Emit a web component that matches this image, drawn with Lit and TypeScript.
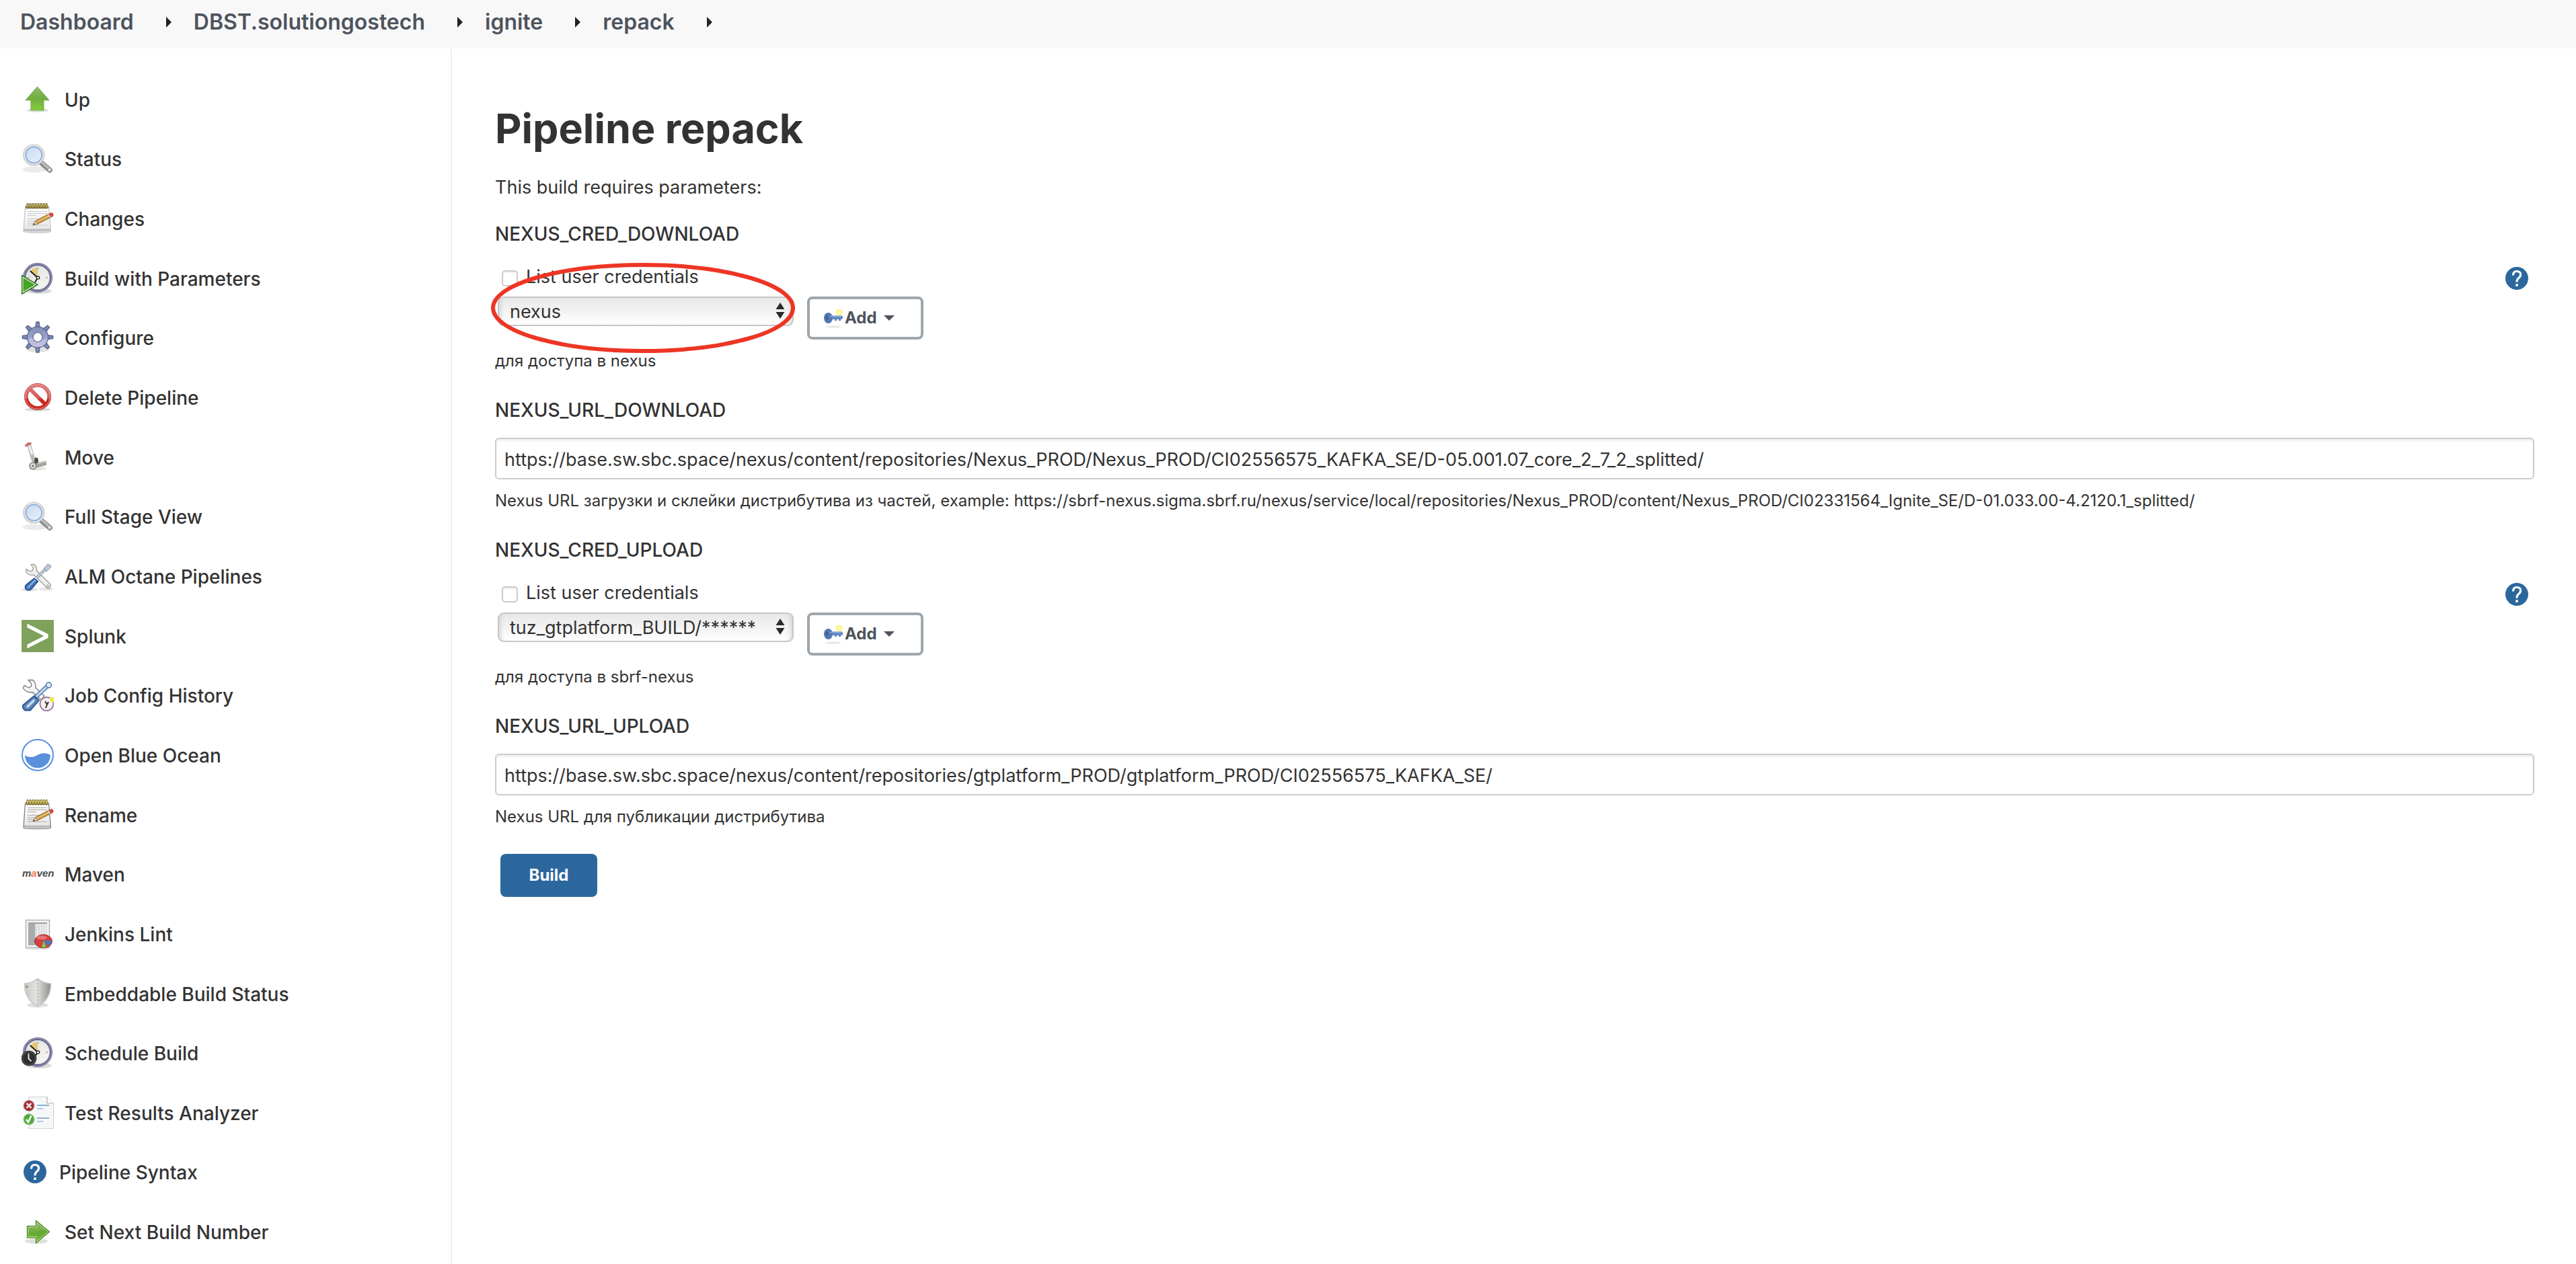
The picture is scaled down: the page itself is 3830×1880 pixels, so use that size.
import { LitElement, html, svg, css, TemplateResult, SVGTemplateResult } from "lit";
import { customElement, property } from "lit/decorators.js";

/* ---------- Icon artwork, drawn on a 48 x 48 grid ---------- */

const magnifier = svg`
  <ellipse cx="20" cy="40" rx="18" ry="4.5" fill="#000" opacity=".08"/>
  <path d="M28 29 L42 41" stroke="#8f8f8f" stroke-width="8" stroke-linecap="round"/>
  <path d="M29 28 L41 39" stroke="#c4c4c4" stroke-width="3" stroke-linecap="round"/>
  <circle cx="41.500" cy="40.500" r="2.600" fill="#e6e6e6" stroke="#9c9c9c"/>
  <circle cx="18.300" cy="18.500" r="15.500" fill="#e9e9e8" stroke="#c2c2c2" stroke-width="1.200"/>
  <circle cx="18.300" cy="18.500" r="12" fill="url(#lens)" stroke="#8fb0dc" stroke-width="2"/>`;

const notepad = (line: string, ring: string, edge: string) => svg`
  <ellipse cx="24" cy="44" rx="18" ry="2.500" fill="#000" opacity=".12"/>
  <path d="M5.500 7 H40.500 L43.500 42.500 Q43.500 44 42 44 H4.500 Q3 44 3 42.500 Z" fill="url(#paper)" stroke="${edge}" stroke-width="1.200"/>
  <path d="M5.500 5 H40.500 V9 H5.500 Z" fill="#9a9a92"/>
  <path d="M3.500 41 H43" stroke="#b5b5b5" stroke-width="2.500"/>
  <path d="M9 13.500 H38 M9 16.500 H38 M9 19.500 H22 M9 24.500 H30 M9 28 H26 M9 31 H22 M9 34 H38" stroke="${line}" stroke-width="1"/>
  <path d="M9 2.500 V8 M13 2.500 V8 M17 2.500 V8 M21 2.500 V8 M25 2.500 V8 M29 2.500 V8 M33 2.500 V8 M37 2.500 V8" stroke="#6f601f" stroke-width="3.200" stroke-linecap="round"/>
  <path d="M9 3 V7 M13 3 V7 M17 3 V7 M21 3 V7 M25 3 V7 M29 3 V7 M33 3 V7 M37 3 V7" stroke="${ring}" stroke-width="1.600" stroke-linecap="round"/>
  <path d="M17 33.500 L21 27.500 L41 17 L44 22 L24 32 Z" fill="#d3a04a" stroke="#8a5a1c" stroke-width="1"/>
  <path d="M22 29.500 L42 19.500" stroke="#f0cf8c" stroke-width="1.200"/>
  <path d="M17 33.500 L21 27.500 L24 32 Z" fill="#ecdcb8" stroke="#8a6a3c" stroke-width=".800"/>
  <path d="M17 33.500 L18.800 31 L20 32.500 Z" fill="#333"/>
  <path d="M39 18 L41 17 L44 22 L42 23 Z" fill="#c9c9c9"/>
  <path d="M41 17 L44 15.500 Q46.500 15 47 17.500 Q47.500 20 46 21 L44 22 Z" fill="#e0463f" stroke="#a33" stroke-width=".600"/>`;

const clockFace = svg`
  <ellipse cx="26" cy="43" rx="19" ry="4" fill="#000" opacity=".14"/>
  <circle cx="24" cy="23" r="20" fill="url(#face)" stroke="#5c5c80" stroke-width="4"/>
  <circle cx="24" cy="23" r="20.500" fill="none" stroke="#9a9abd" stroke-width="1.600"/>
  <circle cx="24" cy="23" r="17.600" fill="none" stroke="#b9b9c6" stroke-width=".800"/>
  <path d="M24 23 L13 13 Q18 8 24 8 Z" fill="#e3c368" opacity=".9"/>
  <circle cx="24" cy="9" r="1.500" fill="#b7b7b0"/>
  <circle cx="37.500" cy="23" r="1.500" fill="#b7b7b0"/>
  <circle cx="10" cy="23" r="1.500" fill="#b7b7b0"/>
  <path d="M13 13 L24 23 L20 30" fill="none" stroke="#111" stroke-width="1.700"/>
  <circle cx="24.500" cy="23" r="2.200" fill="#fff" stroke="#111" stroke-width="1.200"/>`;

const question = svg`
  <circle cx="24" cy="24" r="20.400" fill="#2b679d"/>
  <path d="M17.400 18.600 Q17.400 11.400 24 11.400 Q30.800 11.400 30.800 17.800 Q30.800 20.600 27.600 23.200 Q24 26 24 30.600" fill="none" stroke="#fff" stroke-width="3.800"/>
  <rect x="21.900" y="34" width="4.300" height="4.300" fill="#fff"/>`;

const gearTooth = "M20.800 9 L22 .800 H26 L27.200 9 Z";

const icons: Record<string, SVGTemplateResult> = {
  up: svg`
    <ellipse cx="24" cy="40" rx="16" ry="3" fill="#000" opacity=".13"/>
    <path d="M23.500 5 L41 25 H33 V40 H14 V25 H6 Z" fill="url(#green)" stroke="#74a848" stroke-width="1"/>`,
  magnifier,
  changes: notepad("#c9c9c9", "#cdb653", "#c2c2c2"),
  rename: notepad("#a8a8a8", "#f2da55", "#777777"),
  build: svg`${clockFace}
    <path d="M.600 19.500 L24 33.500 L.600 47.400 Z" fill="#48a32a" stroke="#2d6a1a" stroke-width="1.200"/>
    <path d="M2 22.200 L21 33.500 L2 44.800 Z" fill="none" stroke="#d8efcf" stroke-width="1.100"/>`,
  gear: svg`
    <ellipse cx="24" cy="42" rx="17" ry="4" fill="#000" opacity=".12"/>
    <g fill="url(#gear)" stroke="#55618a" stroke-width="1.300">
      ${[0, 45, 90, 135, 180, 225, 270, 315].map((a) => svg`<path d="${gearTooth}" transform="rotate(${a} 24 23.500)"/>`)}
      <circle cx="24" cy="23.500" r="15.500"/>
    </g>
    <circle cx="24" cy="23.500" r="14.900" fill="url(#gear)"/>
    <path d="M10 27 Q18 21 27 26 Q33 29 38.500 24 Q38 35 28 38 Q14 39 10 27 Z" fill="#c9c3e4" opacity=".7"/>
    <circle cx="24" cy="23.500" r="7" fill="#fff" stroke="#55618a" stroke-width="1.200"/>`,
  forbid: svg`
    <ellipse cx="24" cy="42" rx="19" ry="2.500" fill="#000" opacity=".16"/>
    <circle cx="24" cy="23" r="17" fill="#fff"/>
    <g fill="none" stroke="url(#red)">
      <circle cx="24" cy="23" r="17" stroke-width="5.600"/>
      <path d="M12 11 L36 35" stroke-width="5.600"/>
    </g>
    <circle cx="24" cy="23" r="19.600" fill="none" stroke="#b53838" stroke-width=".800"/>
    <circle cx="24" cy="23" r="18.300" fill="none" stroke="#f3b9b9" stroke-width=".800"/>`,
  move: svg`
    <ellipse cx="24" cy="41" rx="13" ry="3" fill="#000" opacity=".1"/>
    <path d="M11 5 L17 26 L20 34" fill="none" stroke="#b9b9b6" stroke-width="6"/>
    <path d="M11.500 7 L16 20" fill="none" stroke="#f5f5f3" stroke-width="3"/>
    <path d="M6 8 Q9 2.500 14.500 4" fill="none" stroke="#cf6a70" stroke-width="3.500"/>
    <path d="M19 33 L37 29 L37 36 L21 40 Z" fill="#a3a69e"/>
    <path d="M20 34 L37 30" stroke="#d2d4ce" stroke-width="1.500"/>
    <ellipse cx="22" cy="29" rx="3" ry="4.500" fill="#474a47"/>
    <circle cx="17" cy="37" r="5" fill="#d6d8d3" stroke="#80837d" stroke-width="1.600"/>
    <circle cx="17" cy="37" r="1.600" fill="#777"/>`,
  tools: svg`
    <ellipse cx="12" cy="44" rx="12" ry="2.500" fill="#000" opacity=".12"/>
    <ellipse cx="36" cy="43" rx="11" ry="2.500" fill="#000" opacity=".1"/>
    <path d="M14 6.500 L18 6 Q23 9 22.500 16 L43 36 Q44.500 41 39 42.500 L18.500 22 Q11 24 6.500 17 L7 13.500 L12.500 17 L16.500 15.500 L17.500 11.500 Z" fill="#eeeeec" stroke="#8c8e8a" stroke-width="1.100"/>
    <circle cx="39" cy="38.500" r="1.600" fill="#fff" stroke="#8c8e8a"/>
    <path d="M22 27 L36 13" stroke="#8493a5" stroke-width="4.200"/>
    <path d="M22 27 L36 13" stroke="#c6d3e0" stroke-width="2.200"/>
    <path d="M33.500 12 L39 6 L44 8.500 L42.500 12 L37 17 Z" fill="#b9c8d8" stroke="#8493a5" stroke-width="1"/>
    <path d="M19 27 L24.500 31.500 L15 43 Q11 46.500 7 44 Q3.500 40.500 7 36.500 Z" fill="#3f6fb3" stroke="#204a87" stroke-width="1.300"/>
    <path d="M20 30 L9.500 41" stroke="#8fb4e3" stroke-width="2.200" stroke-linecap="round"/>`,
  splunk: svg`
    <rect width="48" height="48" fill="#7ea25c"/>
    <path d="M8 5 L40 21 V27 L8 43 V36.500 L32.500 24 L8 11.500 Z" fill="#fff" stroke="#6c8f4b" stroke-width=".600"/>`,
  history: svg`
    <path d="M10 1.500 L17 1.500 Q22 6 21 13 L34 25 L29 31 L16.500 19.500 Q7 21 2.500 13.500 L4 9.500 L11 13 L14.500 10.500 L14.500 6.500 Z" fill="#f4f4f3" stroke="#7c7e7a" stroke-width="1.300"/>
    <path d="M21 27 L40 9" stroke="#4a74ae" stroke-width="6"/>
    <path d="M21 27 L40 9" stroke="#c6d6ea" stroke-width="3.200"/>
    <circle cx="40.500" cy="9" r="4" fill="#dbe6f3" stroke="#4a74ae" stroke-width="1.400"/>
    <path d="M19 25 L26 31.500 L13 46.500 H5 L2 43 V39 Z" fill="#5f86bb" stroke="#2c538e" stroke-width="1.800"/>
    <path d="M19 31 L8 42" stroke="#c9daf0" stroke-width="3.500"/>
    <circle cx="37.500" cy="37" r="10" fill="#f4f1f3" stroke="#9a7ca1" stroke-width="1.800"/>
    <path d="M42 27 L48 27 V35 L43 33 Z" fill="#efe743"/>
    <path d="M35 33 L38 38 L40 34 M38 38 L36 43" fill="none" stroke="#3b3420" stroke-width="2"/>`,
  ocean: svg`
    <circle cx="24" cy="24" r="23" fill="#fff" stroke="#5a90dc" stroke-width="2"/>
    <path d="M5 24.500 Q12 29 21 25.500 Q34 18 43 24 A19 19 0 0 1 5 24.500 Z" fill="#5a90dc"/>`,
  maven: svg`
    <text x="1" y="28" font-family="Liberation Sans, sans-serif" font-size="15" font-weight="700" font-style="italic" fill="#4b4b4b">m<tspan fill="#ee7b4a">a</tspan>ven</text>`,
  lint: svg`
    <path d="M4 45 H42 L38 47.500 H8 Z" fill="#000" opacity=".1"/>
    <rect x="6.500" y="3.500" width="35" height="41" fill="#f2f2f2" stroke="#b0b0b0" stroke-width="1.400"/>
    <rect x="10" y="7" width="10" height="34" fill="#aaaaaa"/>
    <rect x="20" y="7" width="18" height="34" fill="#dcdcdc"/>
    <path d="M10 8 H38" stroke="#a0a0a0" stroke-width="2"/>
    <path d="M24 9 V41 M28 9 V41 M32 9 V41 M36 9 V41" stroke="#f5f5f5" stroke-width="1.200"/>
    <ellipse cx="32.500" cy="35" rx="13" ry="10" fill="#d24040" stroke="#a02a2a" stroke-width="1"/>
    <ellipse cx="30" cy="29.500" rx="8" ry="3" fill="#ec8a86" opacity=".7"/>
    <path d="M32 34 H45.300 Q45 39 39 42 Z" fill="#4a76bd"/>
    <path d="M33 34 L37 43.500 Q33 45 29.500 44 Z" fill="#86c34a"/>`,
  shield: svg`
    <ellipse cx="24" cy="41" rx="16" ry="3.500" fill="#000" opacity=".12"/>
    <path d="M24 1.500 Q32 8 43.500 9 Q44 32 24 43 Q4 32 4.500 9 Q16 8 24 1.500 Z" fill="url(#steel)" stroke="#c6c8c4" stroke-width="1.600"/>
    <path d="M24 3 V42" stroke="#a3a5a0" stroke-width="2.500" stroke-dasharray="1.500 3.500" opacity=".7"/>
    <circle cx="8" cy="13.500" r="1.800" fill="#8d8f8a"/>
    <circle cx="40" cy="13.500" r="1.800" fill="#8d8f8a"/>`,
  schedule: svg`${clockFace}
    <circle cx="11" cy="32" r="11.300" fill="#2f2f2f"/>
    <circle cx="11" cy="32" r="9.500" fill="none" stroke="#4d4d4d" stroke-width="1.500"/>
    <path d="M10.500 25 V32.500 L14.500 36.500" fill="none" stroke="#dedede" stroke-width="2"/>`,
  results: svg`
    <path d="M11 .500 H38 L47.500 10 V47.500 H11 Z" fill="#f6f7f8" stroke="#cfd1d3" stroke-width="1"/>
    <path d="M38 .500 V10 H47.500" fill="#fff" stroke="#a9abad" stroke-width="1.200"/>
    <path d="M23 13 H41 M23 32 H41" stroke="#6f98cd" stroke-width="1.500"/>
    <path d="M23 18 H32.500 M23 37 H32.500" stroke="#9dbbe0" stroke-width="1.500"/>
    <circle cx="11" cy="13.600" r="8.200" fill="#a52a2c" stroke="#c9bcbc" stroke-width="1.200"/>
    <path d="M7.500 10 L14.500 17 M14.500 10 L7.500 17" stroke="#e6dede" stroke-width="2.800"/>
    <circle cx="11" cy="33.800" r="8.200" fill="#4eae32" stroke="#bccdb8" stroke-width="1.200"/>
    <path d="M7 34 L10 38 L14.500 28.500" fill="none" stroke="#fff" stroke-width="2.500"/>`,
  question,
  next: svg`
    <ellipse cx="22" cy="38" rx="17" ry="4" fill="#000" opacity=".12"/>
    <path d="M8.500 15.500 H21.500 V7.500 L41.500 24 L21.500 41 V33 H8.500 Z" fill="url(#green)" stroke="#4b7f27" stroke-width="1.200"/>
    <path d="M10 17 H23 V10.500 L39.500 24 L23 38 V31.500 H10 Z" fill="none" stroke="#c4e3a4" stroke-width=".900"/>
    <path d="M10 25 Q22 24 36 21 L39 24 L23 37 V31 H10 Z" fill="#5aa52a" opacity=".55"/>`,
};

const gradients = svg`
  <defs>
    <linearGradient id="green" x1="0" y1="0" x2="0" y2="1"><stop offset="0" stop-color="#8fbd68"/><stop offset=".500" stop-color="#6fae40"/><stop offset="1" stop-color="#84cc3c"/></linearGradient>
    <linearGradient id="lens" x1="0" y1="0" x2="1" y2="1"><stop offset="0" stop-color="#c5daf2"/><stop offset="1" stop-color="#e9f0fa"/></linearGradient>
    <linearGradient id="paper" x1="0" y1="0" x2="0" y2="1"><stop offset="0" stop-color="#ffffff"/><stop offset="1" stop-color="#e4e4e4"/></linearGradient>
    <linearGradient id="face" x1="0" y1="0" x2="1" y2="1"><stop offset="0" stop-color="#dcdcd8"/><stop offset="1" stop-color="#fafaf8"/></linearGradient>
    <linearGradient id="gear" gradientUnits="userSpaceOnUse" x1="24" y1="0" x2="24" y2="47"><stop offset="0" stop-color="#7385ae"/><stop offset=".500" stop-color="#98a3c9"/><stop offset="1" stop-color="#cbc5e6"/></linearGradient>
    <linearGradient id="red" gradientUnits="userSpaceOnUse" x1="24" y1="3" x2="24" y2="43"><stop offset="0" stop-color="#e07a7a"/><stop offset=".550" stop-color="#d65a5a"/><stop offset=".600" stop-color="#c92a24"/><stop offset="1" stop-color="#cf2a24"/></linearGradient>
    <linearGradient id="steel" x1="0" y1="0" x2="1" y2="0"><stop offset="0" stop-color="#c4c6c1"/><stop offset=".450" stop-color="#e3e4e1"/><stop offset="1" stop-color="#8f918c"/></linearGradient>
  </defs>`;

@customElement("app-icon")
export class AppIcon extends LitElement {
  @property() name = "up";

  static styles = css`
    :host { display: block; flex: none; width: 48px; height: 48px; }
    svg { display: block; width: 100%; height: 100%; }
  `;

  render() {
    return html`<svg viewBox="0 0 48 48" fill="none" aria-hidden="true">${gradients}${icons[this.name]}</svg>`;
  }
}

/* ---------- Page data ---------- */

const crumbs = ["Dashboard", "DBST.solutiongostech", "ignite", "repack"];

const tasks: Array<[string, string]> = [
  ["up", "Up"],
  ["magnifier", "Status"],
  ["changes", "Changes"],
  ["build", "Build with Parameters"],
  ["gear", "Configure"],
  ["forbid", "Delete Pipeline"],
  ["move", "Move"],
  ["magnifier", "Full Stage View"],
  ["tools", "ALM Octane Pipelines"],
  ["splunk", "Splunk"],
  ["history", "Job Config History"],
  ["ocean", "Open Blue Ocean"],
  ["rename", "Rename"],
  ["maven", "Maven"],
  ["lint", "Jenkins Lint"],
  ["shield", "Embeddable Build Status"],
  ["schedule", "Schedule Build"],
  ["results", "Test Results Analyzer"],
  ["question", "Pipeline Syntax"],
  ["next", "Set Next Build Number"],
];

@customElement("app-root")
export class AppRoot extends LitElement {
  static styles = css`
    :host {
      display: flex;
      flex-direction: column;
      min-height: 100vh;
      background: #fff;
      color: #333;
      font-family: Inter, "Noto Sans", sans-serif;
      font-size: 27px;
      line-height: 36px;
    }
    *, *::before, *::after { box-sizing: border-box; }
    a { color: inherit; text-decoration: none; }
    button, input, select { font: inherit; color: inherit; margin: 0; }

    .crumbs {
      display: flex;
      align-items: center;
      height: 72px;
      margin: 0;
      padding: 0 30px 6px;
      list-style: none;
      background: #f8f8f8;
      color: #4d545d;
      font-size: 32px;
      font-weight: 600;
    }
    .crumb { display: flex; align-items: center; }
    .crumb::after {
      content: "";
      margin: 0 33px 0 48px;
      border: solid transparent;
      border-width: 8px 0 8px 8px;
      border-left-color: #222;
    }

    .body { display: flex; flex: 1; }
    .side { flex: none; width: 672px; border-right: 2px solid #efefef; }
    .tasks {
      display: grid;
      grid-auto-rows: 88px 89px 89px;
      align-items: start;
      margin: 0;
      padding: 52px 32px 0;
      list-style: none;
      font-size: 28px;
      font-weight: 500;
    }
    .task { display: flex; align-items: center; gap: 16px; line-height: 44px; }
    .task-label { padding-top: 2px; }
    .small { width: 40px; height: 40px; }

    .main { flex: 1; min-width: 0; padding: 83px 62px 60px 64px; }
    .title { margin: 0 0 34px; font-size: 61px; line-height: 72px; font-weight: 700; }
    .intro { margin: 0 0 33px; }
    .param { position: relative; margin-bottom: 39px; }
    .name { display: block; font-size: 28px; font-weight: 500; }
    .list-row { display: flex; align-items: center; justify-content: space-between; height: 36px; margin: 28px 0 11px; padding: 0 6px 0 10px; }
    .check { display: flex; align-items: center; gap: 12px; }
    .box {
      appearance: none;
      width: 24px;
      height: 24px;
      margin-top: 4px;
      border: 2px solid #ccc;
      border-radius: 5px;
      background: #fff;
      box-shadow: inset 0 2px 2px #eee;
    }
    .help { display: block; padding: 0; border: 0; background: none; margin-top: 4px; }
    .pick-row { display: flex; align-items: flex-start; gap: 20px; padding-left: 4px; }
    .pick { position: relative; display: block; }
    .select {
      appearance: none;
      display: block;
      width: 440px;
      height: 44px;
      padding: 2px 56px 0 16px;
      border: 2px solid #c6c6c6;
      border-radius: 9px;
      background: linear-gradient(#e8e8e8, #f3f3f3 50%, #fff);
      box-shadow: inset 8px 0 6px -6px #d2d2d2, inset -8px 0 6px -6px #d2d2d2;
      line-height: 36px;
    }
    .arrows { position: absolute; right: 13px; top: 9px; width: 14px; height: 24px; pointer-events: none; }
    .add {
      display: flex;
      align-items: center;
      width: 173px;
      height: 64px;
      padding: 0 0 0 20px;
      border: 4px solid #9da6ad;
      border-radius: 8px;
      background: #fff;
      color: #4d545d;
      font-size: 24px;
      font-weight: 700;
    }
    .key { flex: none; width: 32px; height: 40px; }
    .caret { margin-left: 10px; border: solid transparent; border-width: 8px 8px 0; border-top-color: #4d545d; }
    .text {
      display: block;
      width: 100%;
      height: 62px;
      margin-top: 23px;
      padding: 2px 12px 0;
      border: 2px solid #ccc;
      border-radius: 6px;
      background: #fff;
      box-shadow: inset 0 3px 3px #f0f0f0;
    }
    .note { margin: 16px 0 0; font-size: 24px; line-height: 32px; }
    .ring { position: absolute; left: -8px; top: 60px; width: 456px; height: 136px; pointer-events: none; }
    .submit {
      display: block;
      width: 144px;
      height: 64px;
      margin-left: 8px;
      padding: 0;
      border: 0;
      border-radius: 8px;
      background: #2b679d;
      color: #fff;
      font-size: 24px;
      font-weight: 700;
    }
  `;

  private credentials(name: string, value: string, note: string, ringed: boolean): TemplateResult {
    return html`
      <section class="param">
        <label class="name" for=${name}>${name}</label>
        <div class="list-row">
          <label class="check"><input class="box" type="checkbox" />List user credentials</label>
          <button class="help" type="button" aria-label="Help"><app-icon class="small" name="question"></app-icon></button>
        </div>
        <div class="pick-row">
          <span class="pick">
            <select class="select" id=${name}><option>${value}</option></select>
            <svg class="arrows" viewBox="0 0 14 24" aria-hidden="true"><path d="M7 0 L13.500 10 H.500 Z M7 24 L13.500 14 H.500 Z" fill="#2b2b2b"/></svg>
          </span>
          <button class="add" type="button">
            <svg class="key" viewBox="0 0 32 40" aria-hidden="true">
              <ellipse cx="15" cy="33" rx="12" ry="2" fill="#000" opacity=".08"/>
              <circle cx="23.500" cy="11.500" r="5" fill="#fbf58a"/>
              <circle cx="23.500" cy="11.500" r="2" fill="#fffbc9"/>
              <path d="M12 16.500 H28 L29.500 19 L28 22 H26 V24 H23 V22 H20 V24 H17 V22 H12 Z" fill="#6288c4"/>
              <ellipse cx="7.500" cy="20" rx="6.500" ry="8" fill="#5478b4"/>
              <ellipse cx="5.500" cy="19.500" rx="2" ry="3.500" fill="#456294"/>
              <path d="M9 17.500 H27" stroke="#8fadd9" stroke-width="1.500"/>
            </svg>Add<span class="caret"></span>
          </button>
        </div>
        <p class="note">${note}</p>
        ${ringed
          ? html`<svg class="ring" viewBox="0 0 456 136" aria-hidden="true"><ellipse cx="228" cy="68" rx="223" ry="64" fill="none" stroke="#ee3524" stroke-width="6"/></svg>`
          : ""}
      </section>`;
  }

  private url(name: string, value: string, note: string): TemplateResult {
    return html`
      <section class="param">
        <label class="name" for=${name}>${name}</label>
        <input class="text" id=${name} type="text" .value=${value} />
        <p class="note">${note}</p>
      </section>`;
  }

  render() {
    return html`
      <nav><ul class="crumbs">${crumbs.map((c) => html`<li class="crumb"><a href="#">${c}</a></li>`)}</ul></nav>
      <div class="body">
        <nav class="side">
          <ul class="tasks">
            ${tasks.map(([icon, label]) => html`
              <li><a class="task" href="#"><app-icon class=${icon === "question" ? "small" : ""} name=${icon}></app-icon><span class="task-label">${label}</span></a></li>`)}
          </ul>
        </nav>
        <main class="main">
          <h1 class="title">Pipeline repack</h1>
          <p class="intro">This build requires parameters:</p>
          ${this.credentials("NEXUS_CRED_DOWNLOAD", "nexus", "для доступа в nexus", true)}
          ${this.url(
            "NEXUS_URL_DOWNLOAD",
            "https://base.sw.sbc.space/nexus/content/repositories/Nexus_PROD/Nexus_PROD/CI02556575_KAFKA_SE/D-05.001.07_core_2_7_2_splitted/",
            "Nexus URL загрузки и склейки дистрибутива из частей, example: https://sbrf-nexus.sigma.sbrf.ru/nexus/service/local/repositories/Nexus_PROD/content/Nexus_PROD/CI02331564_Ignite_SE/D-01.033.00-4.2120.1_splitted/",
          )}
          ${this.credentials("NEXUS_CRED_UPLOAD", "tuz_gtplatform_BUILD/******", "для доступа в sbrf-nexus", false)}
          ${this.url(
            "NEXUS_URL_UPLOAD",
            "https://base.sw.sbc.space/nexus/content/repositories/gtplatform_PROD/gtplatform_PROD/CI02556575_KAFKA_SE/",
            "Nexus URL для публикации дистрибутива",
          )}
          <button class="submit" type="button">Build</button>
        </main>
      </div>`;
  }
}
